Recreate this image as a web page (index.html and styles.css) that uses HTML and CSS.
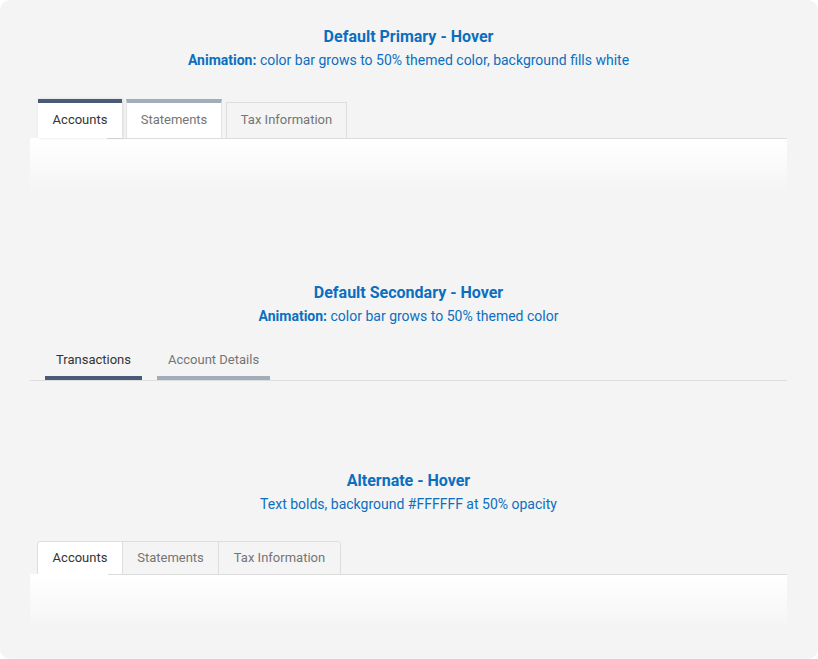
FILE: index.html
```html
<!DOCTYPE html>
<html>
<head>
<meta charset="utf-8">
<link rel="stylesheet" href="styles.css">
</head>
<body>
<div class="card">
  <section class="sec sec1">
    <h2 class="title">Default Primary - Hover</h2>
    <p class="sub"><b>Animation:</b> color bar grows to 50% themed color, background fills white</p>
    <div class="ptabs">
      <div class="ptab active">Accounts</div>
      <div class="ptab hover">Statements</div>
      <div class="ptab">Tax Information</div>
    </div>
    <div class="panel"></div>
  </section>

  <section class="sec sec2">
    <h2 class="title">Default Secondary - Hover</h2>
    <p class="sub"><b>Animation:</b> color bar grows to 50% themed color</p>
    <div class="stabs">
      <div class="stab active">Transactions</div>
      <div class="stab hover">Account Details</div>
    </div>
  </section>

  <section class="sec sec3">
    <h2 class="title">Alternate - Hover</h2>
    <p class="sub">Text bolds, background #FFFFFF at 50% opacity</p>
    <div class="atabs">
      <div class="agroup">
        <div class="atab active">Accounts</div>
        <div class="atab">Statements</div>
        <div class="atab">Tax Information</div>
      </div>
    </div>
    <div class="panel"></div>
  </section>
</div>
</body>
</html>
```
FILE: styles.css
```css
* { box-sizing: border-box; }
html, body { margin: 0; padding: 0; background: #ffffff; }
body { font-family: Roboto, "Liberation Sans", sans-serif; }

.card {
  width: 818px;
  height: 659px;
  background: #f4f4f4;
  border-radius: 10px;
  padding: 27px 31px 0 30px;
  overflow: hidden;
}

.title {
  margin: 0;
  text-align: center;
  font-size: 16px;
  line-height: 20px;
  font-weight: 700;
  color: #0b6fc0;
}
.sub {
  margin: 4px 0 0;
  text-align: center;
  font-size: 14px;
  line-height: 18px;
  color: #0b6fc0;
}
.sub b { font-weight: 700; }

/* primary tabs */
.ptabs {
  margin-top: 30px;
  display: flex;
  align-items: flex-end;
  gap: 4px;
  padding-left: 8px;
  height: 40px;
  position: relative;
  border-bottom: 1px solid #dcdcdc;
}
.ptabs::before {
  content: "";
  position: absolute;
  left: 0;
  bottom: -1px;
  width: 77px;
  height: 1px;
  background: #ffffff;
}
.ptab {
  height: 36px;
  width: 121px;
  padding-bottom: 2px;
  display: flex;
  align-items: center;
  justify-content: center;
  white-space: nowrap;
  font-size: 13px;
  color: #757575;
  background: #f4f4f4;
  border: 1px solid #dddddd;
  border-bottom: none;
}
.ptab.active {
  width: 84px;
  height: 39px;
  background: #ffffff;
  color: #333333;
  border: none;
  border-top: 4px solid #4b5a78;
  box-shadow: 1px 0 3px rgba(0,0,0,0.12);
  position: relative;
  z-index: 1;
}
.ptab.hover {
  height: 39px;
  width: 96px;
  background: #ffffff;
  border-top: 4px solid #a3acba;
  border-left: 1px solid #e2e2e2;
  border-right: 1px solid #e2e2e2;
}

.panel {
  height: 50px;
  background: linear-gradient(#ffffff, #f5f5f5);
}

/* secondary */
.sec2 { margin-top: 94px; }
.stabs {
  margin-top: 15px;
  display: flex;
  gap: 15px;
  padding-left: 15px;
  border-bottom: 1px solid #dddddd;
}
.stab {
  height: 40px;
  padding: 11px 11px 0;
  font-size: 13px;
  line-height: 18px;
  white-space: nowrap;
  color: #757575;
  border-bottom: 4px solid #a3acba;
}
.stab.active {
  color: #333333;
  border-bottom-color: #4b5a78;
}

/* alternate */
.sec3 { margin-top: 90px; }
.atabs {
  margin-top: 28px;
  padding-left: 7px;
  height: 34px;
  position: relative;
  border-bottom: 1px solid #dcdcdc;
}
.atabs::before {
  content: "";
  position: absolute;
  left: 0;
  bottom: -1px;
  width: 78px;
  height: 1px;
  background: #ffffff;
}
.agroup {
  display: inline-flex;
  height: 33px;
  border: 1px solid #dddddd;
  border-bottom: none;
  border-radius: 4px 4px 0 0;
  overflow: hidden;
}
.atab {
  height: 32px;
  padding-bottom: 2px;
  display: flex;
  align-items: center;
  justify-content: center;
  white-space: nowrap;
  font-size: 13px;
  color: #757575;
  background: #f4f4f4;
  border-left: 1px solid #dddddd;
  width: 96px;
}
.atab:nth-child(3) { width: 122px; }
.atab.active {
  width: 84px;
  border-left: none;
  background: #ffffff;
  color: #333333;
}
```
